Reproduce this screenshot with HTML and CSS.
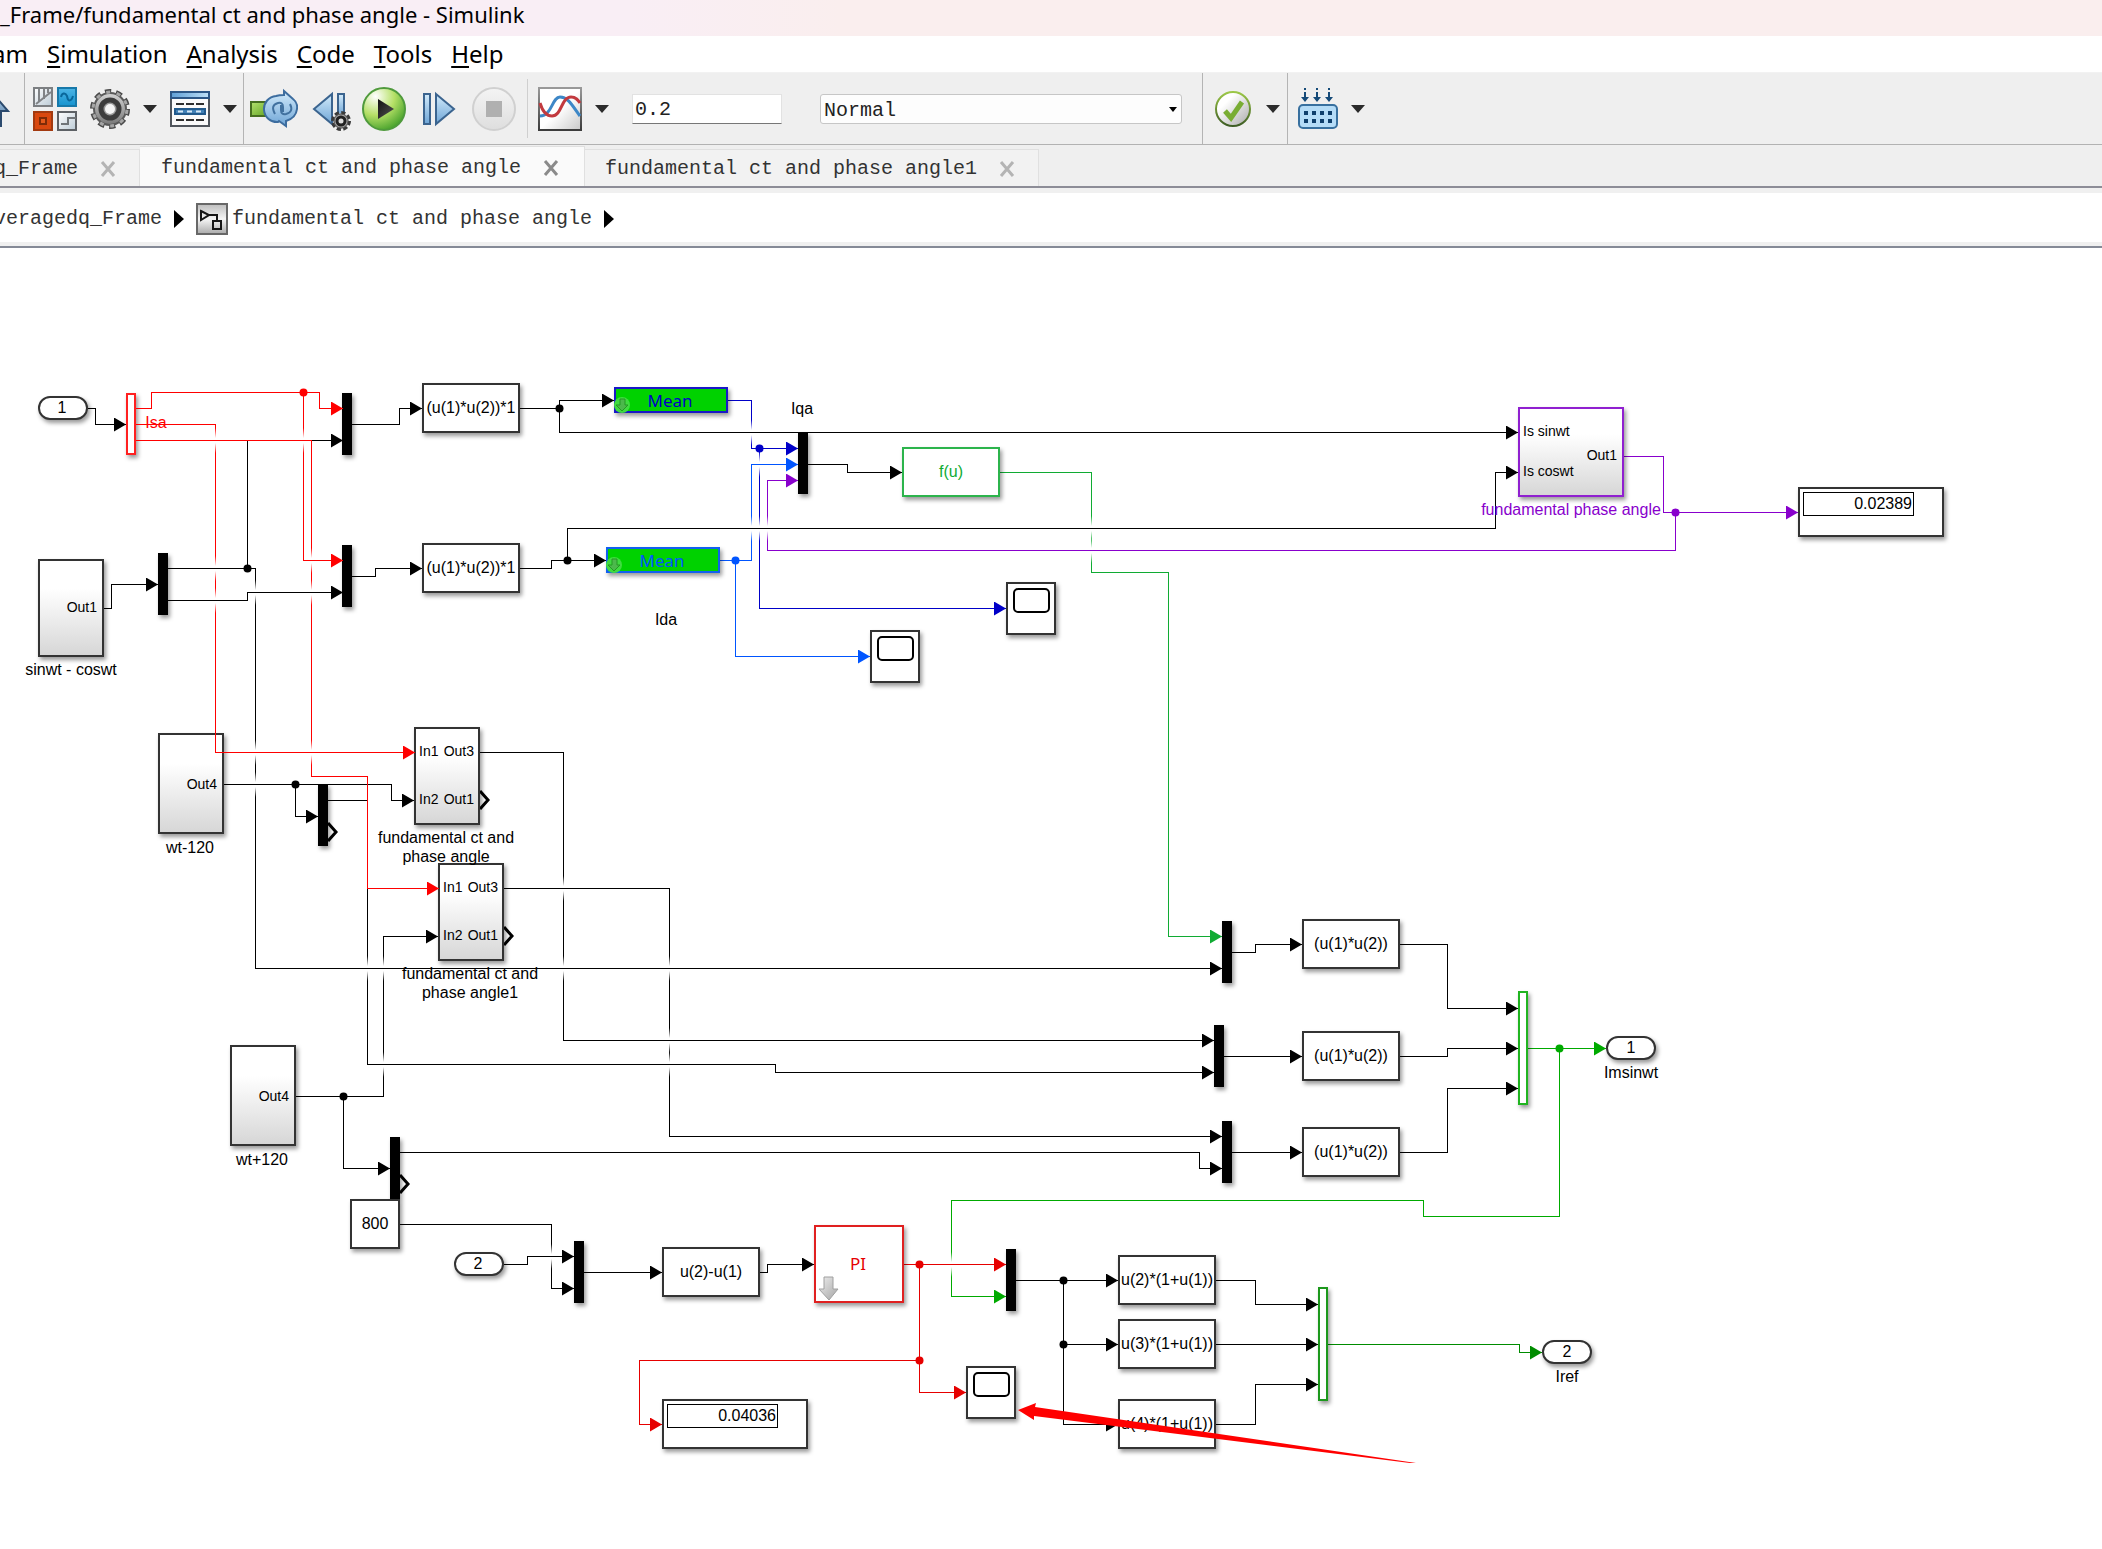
FILE: index.html
```html
<!DOCTYPE html>
<html lang="en">
<head>
<meta charset="utf-8">
<title>Simulink</title>
<link rel="stylesheet" href="styles.css">
</head>
<body>
<header class="titlebar"><h1>_Frame/fundamental ct and phase angle - Simulink</h1></header>

<nav class="menubar">
  <button class="menu-cut">am</button>
  <button><u>S</u>imulation</button>
  <button><u>A</u>nalysis</button>
  <button><u>C</u>ode</button>
  <button><u>T</u>ools</button>
  <button><u>H</u>elp</button>
</nav>

<div class="toolbar">
  <div class="group group-up">
    <button aria-label="Up to parent"><svg width="12" height="44"><defs><linearGradient id="upFill" x1="0" y1="0" x2="0" y2="1"><stop offset="0" stop-color="#a8cdec"/><stop offset="1" stop-color="#3f648c"/></linearGradient></defs><path d="M-12 22 L-4 10 L8 24 H1 V39 H-6" fill="url(#upFill)" stroke="#2b4a6e" stroke-width="2"/></svg></button>
  </div>
  <div class="group group-model">
    <button aria-label="Library browser">
      <svg width="44" height="46" viewBox="0 0 44 46">
        <defs>
          <linearGradient id="libBlue" x1="0" y1="0" x2="0" y2="1"><stop offset="0" stop-color="#4db5e6"/><stop offset="1" stop-color="#1593cf"/></linearGradient>
          <linearGradient id="libPale" x1="0" y1="0" x2="1" y2="1"><stop offset="0" stop-color="#fff"/><stop offset="1" stop-color="#bccbd6"/></linearGradient>
        </defs>
        <rect x="1" y="2" width="18" height="18" fill="url(#libPale)" stroke="#7c7f82" stroke-width="2"/>
        <path d="M6 3v13M11 3v10M3 18 L18 6M15 3v4" stroke="#808386" stroke-width="2" fill="none"/>
        <rect x="25" y="2" width="18" height="18" fill="url(#libBlue)" stroke="#1779aa" stroke-width="2"/>
        <path d="M28 11c1-4 4-5 6-1c1 6 4 6 6 0" stroke="#09679b" stroke-width="2" fill="none"/>
        <rect x="1" y="26" width="18" height="18" fill="#d9480f" stroke="#a33a10" stroke-width="2"/>
        <rect x="7" y="32" width="6" height="6" fill="#e45a1c" stroke="#7d2b08" stroke-width="2"/>
        <rect x="25" y="26" width="18" height="18" fill="url(#libPale)" stroke="#5d6165" stroke-width="2"/>
        <path d="M28 38h7v-6h8" stroke="#6f7478" stroke-width="2" fill="none"/>
      </svg>
    </button>
    <button aria-label="Model configuration parameters">
      <svg width="40" height="44" viewBox="0 0 40 44">
        <defs><linearGradient id="gearFill" x1="0" y1="0" x2="0" y2="1"><stop offset="0" stop-color="#d5d5d5"/><stop offset="1" stop-color="#777"/></linearGradient></defs>
        <circle cx="20" cy="22" r="17" fill="none" stroke="#4a4a4a" stroke-width="6" stroke-dasharray="6 4.68"/>
        <circle cx="20" cy="22" r="16" fill="url(#gearFill)" stroke="#5a5a5a" stroke-width="2"/>
        <circle cx="20" cy="22" r="17" fill="none" stroke="#a6a6a6" stroke-width="3" stroke-dasharray="4 6.68" stroke-dashoffset="-1"/>
        <circle cx="20" cy="22" r="9" fill="#999" stroke="#3c3c3c" stroke-width="5"/>
        <circle cx="20" cy="22" r="5" fill="#f4f4f4"/>
      </svg>
    </button>
    <button aria-label="Configuration menu"><svg width="14" height="8"><path d="M0 0H14L7 8Z" fill="#2b2b2b"/></svg></button>
    <button aria-label="Model explorer">
      <svg width="40" height="38" viewBox="0 0 40 38">
        <defs><linearGradient id="headBlue" x1="0" y1="0" x2="1" y2="0"><stop offset="0" stop-color="#5f9fd6"/><stop offset="1" stop-color="#bfe0f7"/></linearGradient></defs>
        <rect x="1" y="2" width="38" height="34" fill="#fafafa" stroke="#50555c" stroke-width="2"/>
        <rect x="1" y="2" width="38" height="6" fill="url(#headBlue)" stroke="#2c5686" stroke-width="2"/>
        <rect x="5" y="19" width="30" height="5" fill="#3f7fb5" stroke="#225a8c" stroke-width="2"/>
        <path d="M6 14h28M6 30h28" stroke="#2e2e2e" stroke-width="2" stroke-dasharray="8 2"/>
        <path d="M8 21.500h26" stroke="#d5e8f6" stroke-width="2" stroke-dasharray="5 4"/>
      </svg>
    </button>
    <button aria-label="Explorer menu"><svg width="14" height="8"><path d="M0 0H14L7 8Z" fill="#2b2b2b"/></svg></button>
  </div>
  <div class="group group-run">
    <button aria-label="Update diagram">
      <svg width="48" height="46" viewBox="0 0 48 46">
        <defs>
          <linearGradient id="grn" x1="0" y1="0" x2="1" y2="1"><stop offset="0" stop-color="#b4e26e"/><stop offset="1" stop-color="#5d9f1f"/></linearGradient>
          <linearGradient id="sky" x1="0" y1="0" x2="0" y2="1"><stop offset="0" stop-color="#d3ebfb"/><stop offset="1" stop-color="#6ea5d6"/></linearGradient>
        </defs>
        <rect x="1" y="16" width="20" height="14" fill="url(#grn)" stroke="#466e20" stroke-width="2"/>
        <path d="M28 36a13 13 0 0 1-2-26q3-1 8-1V5l9 8q5 4 4 10q-1 9-11 12v5l-7-5z" fill="url(#sky)" stroke="#3d6d9f" stroke-width="2"/>
        <path d="M25 28q-5-9 3-11q5-1 5 4v5M40 18q4 8-4 10q-5 1-5-4v-5" fill="none" stroke="#41719f" stroke-width="2"/>
      </svg>
    </button>
    <button aria-label="Step back">
      <svg width="48" height="46" viewBox="0 0 48 46">
        <path d="M9 23 L27 8 V38Z" fill="url(#sky)" stroke="#3b648f" stroke-width="2"/>
        <rect x="33" y="8" width="6" height="22" fill="url(#sky)" stroke="#3b648f" stroke-width="2"/>
        <circle cx="36" cy="35" r="8" fill="#bbb" stroke="#3a3a3a" stroke-width="4" stroke-dasharray="4 2.280"/>
        <circle cx="36" cy="35" r="7" fill="#a5a5a5" stroke="#555"/>
        <circle cx="36" cy="35" r="4" fill="#ddd" stroke="#222" stroke-width="3"/>
      </svg>
    </button>
    <button aria-label="Run">
      <svg width="48" height="46" viewBox="0 0 48 46">
        <defs>
          <radialGradient id="runFill" cx=".3" cy=".2" r=".9"><stop offset="0" stop-color="#fff"/><stop offset=".5" stop-color="#b5e066"/><stop offset="1" stop-color="#3a9a25"/></radialGradient>
          <linearGradient id="playFill" x1="0" y1="0" x2="1" y2="1"><stop offset="0" stop-color="#111"/><stop offset="1" stop-color="#555"/></linearGradient>
        </defs>
        <circle cx="24" cy="23" r="21" fill="url(#runFill)" stroke="#4f9a3c" stroke-width="2"/>
        <path d="M18 13 L34 23 L18 33Z" fill="url(#playFill)"/>
      </svg>
    </button>
    <button aria-label="Step forward">
      <svg width="48" height="46" viewBox="0 0 48 46">
        <rect x="9" y="8" width="6" height="30" fill="url(#sky)" stroke="#3b648f" stroke-width="2"/>
        <path d="M21 8 L39 23 L21 38Z" fill="url(#sky)" stroke="#3b648f" stroke-width="2"/>
      </svg>
    </button>
    <button aria-label="Stop" disabled>
      <svg width="48" height="46" viewBox="0 0 48 46">
        <defs><linearGradient id="stopFill" x1="0" y1="0" x2="0" y2="1"><stop offset="0" stop-color="#f4f4f4"/><stop offset="1" stop-color="#dedede"/></linearGradient></defs>
        <circle cx="24" cy="23" r="21" fill="url(#stopFill)" stroke="#d0d0d0" stroke-width="2"/>
        <rect x="16" y="15" width="16" height="16" fill="#b0b0b0"/>
      </svg>
    </button>
  </div>
  <div class="group group-sim">
    <button aria-label="Simulation data inspector">
      <svg width="44" height="46" viewBox="0 0 44 46">
        <defs><linearGradient id="plotFill" x1="0" y1="0" x2="1" y2="1"><stop offset=".5" stop-color="#fff"/><stop offset="1" stop-color="#c9c9c9"/></linearGradient>
        <linearGradient id="plotEdge" x1="0" y1="0" x2="0" y2="1"><stop offset="0" stop-color="#999"/><stop offset="1" stop-color="#3c3c3c"/></linearGradient></defs>
        <rect x="1" y="2" width="42" height="42" fill="url(#plotFill)" stroke="url(#plotEdge)" stroke-width="2"/>
        <path d="M2 30c12 0 12-19 20-19s12 8 20 19" fill="none" stroke="#3d87c7" stroke-width="3"/>
        <path d="M2 17c3 10 7 13 12 13c10 0 9-19 19-19c5 0 7 3 9 6" fill="none" stroke="#c23a3f" stroke-width="3"/>
      </svg>
    </button>
    <button aria-label="Inspector menu"><svg width="14" height="8"><path d="M0 0H14L7 8Z" fill="#2b2b2b"/></svg></button>
    <input class="stop-time" type="text" value="0.2" aria-label="Stop time">
    <div class="mode">
      <select aria-label="Simulation mode"><option>Normal</option></select>
      <svg width="8" height="5"><path d="M0 0H8L4 5Z"/></svg>
    </div>
  </div>
  <div class="group group-check">
    <button aria-label="Model advisor">
      <svg width="36" height="38" viewBox="0 0 36 38">
        <defs>
          <linearGradient id="ringFill" x1="0" y1="0" x2="0" y2="1"><stop offset="0" stop-color="#9cc848"/><stop offset="1" stop-color="#3d5c24"/></linearGradient>
          <linearGradient id="discFill" x1="0" y1="0" x2="1" y2="1"><stop offset=".3" stop-color="#fff"/><stop offset="1" stop-color="#a8a8a8"/></linearGradient>
        </defs>
        <circle cx="18" cy="19" r="17" fill="url(#discFill)" stroke="url(#ringFill)" stroke-width="2"/>
        <path d="M10 21l6 7L27 12" fill="none" stroke="#79ad33" stroke-width="5"/>
      </svg>
    </button>
    <button aria-label="Advisor menu"><svg width="14" height="8"><path d="M0 0H14L7 8Z" fill="#2b2b2b"/></svg></button>
  </div>
  <div class="group group-build">
    <button aria-label="Build model">
      <svg width="40" height="44" viewBox="0 0 40 44">
        <g fill="#154a78"><path d="M6 1h2v2H6zM18 1h2v2h-2zM30 1h2v2h-2zM6 5h2v5h3l-4 5-4-5h3zM18 5h2v5h3l-4 5-4-5h3zM30 5h2v5h3l-4 5-4-5h3z"/></g>
        <rect x="1" y="18" width="38" height="23" rx="4" fill="#b5dcf7" stroke="#38709f" stroke-width="2"/>
        <path d="M6 26h28M6 34h28" stroke="#0f3f6c" stroke-width="4" stroke-dasharray="4 4"/>
      </svg>
    </button>
    <button aria-label="Build menu"><svg width="14" height="8"><path d="M0 0H14L7 8Z" fill="#2b2b2b"/></svg></button>
  </div>
</div>

<div class="tabs" role="tablist">
  <div class="tab tab-cut" role="tab"><span>q_Frame</span><button aria-label="Close tab"><svg width="16" height="16"><path d="M2 1L14 15M14 1L2 15"/></svg></button></div>
  <div class="tab active" role="tab" aria-selected="true"><span>fundamental ct and phase angle</span><button aria-label="Close tab"><svg width="16" height="16"><path d="M2 1L14 15M14 1L2 15"/></svg></button></div>
  <div class="tab" role="tab"><span>fundamental ct and phase angle1</span><button aria-label="Close tab"><svg width="16" height="16"><path d="M2 1L14 15M14 1L2 15"/></svg></button></div>
</div>

<nav class="crumbs" aria-label="Model hierarchy">
  <a class="crumb-cut" href="#">veragedq_Frame</a>
  <svg width="10" height="18"><path d="M0 0L10 9L0 18Z"/></svg>
  <svg class="crumb-icon" width="32" height="32" viewBox="0 0 32 32">
    <defs><linearGradient id="crumbFill" x1="0" y1="0" x2="0" y2="1"><stop offset="0" stop-color="#bdbdbd"/><stop offset=".5" stop-color="#f5f5f5"/><stop offset="1" stop-color="#aaa"/></linearGradient></defs>
    <rect x="1" y="1" width="30" height="30" fill="url(#crumbFill)" stroke="#686868" stroke-width="2"/>
    <path d="M5 8L13 12L5 17ZM13 12h8v6M17 18h8v8h-8z" fill="none" stroke="#161616" stroke-width="2"/>
  </svg>
  <a href="#">fundamental ct and phase angle</a>
  <svg width="10" height="18"><path d="M0 0L10 9L0 18Z"/></svg>
</nav>

<main class="canvas">
<svg class="diagram" role="img" aria-label="Block diagram">
  <defs>
    <marker id="mk" class="mk" markerUnits="userSpaceOnUse" markerWidth="13" markerHeight="14" refX="12" refY="7" orient="auto"><path d="M0 0L12 7L0 14Z" fill="#000"/></marker>
    <marker id="mr" class="mk" markerUnits="userSpaceOnUse" markerWidth="13" markerHeight="14" refX="12" refY="7" orient="auto"><path d="M0 0L12 7L0 14Z" fill="#f00"/></marker>
    <marker id="mc" class="mk" markerUnits="userSpaceOnUse" markerWidth="13" markerHeight="14" refX="12" refY="7" orient="auto"><path d="M0 0L12 7L0 14Z" fill="#e60000"/></marker>
    <marker id="mb" class="mk" markerUnits="userSpaceOnUse" markerWidth="13" markerHeight="14" refX="12" refY="7" orient="auto"><path d="M0 0L12 7L0 14Z" fill="#0000c8"/></marker>
    <marker id="ml" class="mk" markerUnits="userSpaceOnUse" markerWidth="13" markerHeight="14" refX="12" refY="7" orient="auto"><path d="M0 0L12 7L0 14Z" fill="#0055ff"/></marker>
    <marker id="mp" class="mk" markerUnits="userSpaceOnUse" markerWidth="13" markerHeight="14" refX="12" refY="7" orient="auto"><path d="M0 0L12 7L0 14Z" fill="#8800cc"/></marker>
    <marker id="mt" class="mk" markerUnits="userSpaceOnUse" markerWidth="13" markerHeight="14" refX="12" refY="7" orient="auto"><path d="M0 0L12 7L0 14Z" fill="#10ab33"/></marker>
    <marker id="mg" class="mk" markerUnits="userSpaceOnUse" markerWidth="13" markerHeight="14" refX="12" refY="7" orient="auto"><path d="M0 0L12 7L0 14Z" fill="#00aa00"/></marker>
    <marker id="md" class="mk" markerUnits="userSpaceOnUse" markerWidth="13" markerHeight="14" refX="12" refY="7" orient="auto"><path d="M0 0L12 7L0 14Z" fill="#008c00"/></marker>
    <linearGradient id="subFill" x1="0" y1="0" x2="0" y2="1"><stop offset=".3" stop-color="#fff"/><stop offset="1" stop-color="#d6d6d6"/></linearGradient>
    <linearGradient id="fade" x1="0" y1="0" x2="0" y2="1"><stop offset="0" stop-color="#fff" stop-opacity="0"/><stop offset=".4" stop-color="#fff"/><stop offset=".6" stop-color="#fff"/><stop offset="1" stop-color="#fff" stop-opacity="0"/></linearGradient>
    <linearGradient id="maskFill" x1="0" y1="0" x2="1" y2="1"><stop offset="0" stop-color="#eee"/><stop offset="1" stop-color="#a5a5a5"/></linearGradient>
    <g id="hop"><rect x="-1" y="-12" width="3" height="25" fill="url(#fade)"/><rect x="-1" y="0" width="3" height="1" fill="currentColor"/></g>
    <g id="scope"><rect class="blk" width="48" height="51"/><rect x="7" y="6" width="35" height="23" rx="4" fill="none" stroke="#000" stroke-width="2"/></g>
    <path id="openport" d="M0 -9L8 0L0 9" fill="none" stroke="#000" stroke-width="3"/>
    <rect id="mux" class="mux" width="10" height="62"/>
    <rect id="fcn" class="blk" width="96" height="48"/>
    <rect id="port" class="blk" width="48" height="22" rx="11"/>
    <path id="mask" d="M5 0h9v12h5l-9 11l-10-11h5z"/>
    <g id="minimask"><circle cx="7" cy="7" r="8" fill="#3fdc3f"/><path d="M5 1h5v6h3l-6 6l-6-6h4z" fill="#4cb84c" stroke="#229a22"/></g>
  </defs>
  <g transform="translate(0 -248)">
    <g class="wires">
      <g class="k">
        <path d="M88 408.500H95.500V424.500H126"/>
        <path d="M104 608.500H111.500V584.500H158"/>
        <path d="M247.500 568.500V440.500H343"/>
        <path d="M168 568.500H255.500V968.500H1222"/>
        <path d="M168 600.500H247.500V592.500H343"/>
        <path d="M352 424.500H399.500V408.500H422"/>
        <path d="M352 576.500H375.500V568.500H422"/>
        <path d="M519 408.500H559.500V400.500H614"/>
        <path d="M559.500 408.500V432.500H1518"/>
        <path d="M519 568.500H551.500V560.500H606"/>
        <path d="M567.500 560.500V528.500H1495.500V472.500H1518"/>
        <path d="M808 464.500H847.500V472.500H902"/>
        <path d="M224 784.500H391.500V800.500H414"/>
        <path d="M295.500 784.500V816.500H318"/>
        <path d="M480 752.500H563.500V1040.500H1214"/>
        <path d="M504 888.500H669.500V1136.500H1222"/>
        <path d="M328 800.500H367.500V1064.500H775.500V1072.500H1214"/>
        <path d="M296 1096.500H383.500V936.500H438"/>
        <path d="M343.500 1096.500V1168.500H390"/>
        <path d="M400 1152.500H1199.500V1168.500H1222"/>
        <path d="M400 1224.500H551.500V1288.500H574"/>
        <path d="M504 1264.500H527.500V1256.500H574"/>
        <path d="M584 1272.500H662"/>
        <path d="M760 1272.500H767.500V1264.500H814"/>
        <path d="M1232 952.500H1255.500V944.500H1302"/>
        <path d="M1224 1056.500H1302"/>
        <path d="M1232 1152.500H1302"/>
        <path d="M1400 944.500H1447.500V1008.500H1518"/>
        <path d="M1400 1056.500H1447.500V1048.500H1518"/>
        <path d="M1400 1152.500H1447.500V1088.500H1518"/>
        <path d="M1016 1280.500H1118"/>
        <path d="M1063.500 1344.500H1118"/>
        <path d="M1063.500 1280.500V1424.500H1118"/>
        <path d="M1216 1280.500H1255.500V1304.500H1318"/>
        <path d="M1216 1344.500H1318"/>
        <path d="M1216 1424.500H1255.500V1384.500H1318"/>
      </g>
      <g class="p">
        <path d="M1623 456.500H1663.500V512.500H1798"/>
        <path d="M1675.500 512.500V550.500H767.500V480.500H798"/>
      </g>
      <g class="b">
        <path d="M728 400.500H751.500V448.500H798"/>
        <path d="M759.500 448.500V608.500H1006"/>
      </g>
      <g class="l">
        <path d="M720 560.500H751.500V464.500H798"/>
        <path d="M735.500 560.500V656.500H870"/>
      </g>
      <g class="t"><path d="M1000 472.500H1091.500V572.500H1168.500V936.500H1222"/></g>
      <g class="g">
        <path d="M1528 1048.500H1606"/>
        <path d="M1559.500 1048.500V1216.500H1423.500V1200.500H951.500V1296.500H1006"/>
      </g>
      <g class="d"><path d="M1328 1344.500H1519.500V1352.500H1542"/></g>
      <g class="c">
        <path d="M904 1264.500H1006"/>
        <path d="M919.500 1264.500V1392.500H966"/>
        <path d="M919.500 1360.500H639.500V1424.500H662"/>
      </g>
    </g>

    <g class="blocks">
      <use href="#port" x="39" y="397"/>
      <use href="#port" x="455" y="1253"/>
      <use href="#port" x="1607" y="1037"/>
      <use href="#port" x="1543" y="1341"/>
      <use href="#fcn" x="423" y="384"/>
      <use href="#fcn" x="423" y="544"/>
      <use href="#fcn" x="663" y="1248"/>
      <use href="#fcn" x="1303" y="920"/>
      <use href="#fcn" x="1303" y="1032"/>
      <use href="#fcn" x="1303" y="1128"/>
      <use href="#fcn" x="1119" y="1256"/>
      <use href="#fcn" x="1119" y="1320"/>
      <use href="#fcn" x="1119" y="1400"/>
      <rect class="blk s-t" x="903" y="448" width="96" height="48"/>
      <use href="#mux" x="342" y="393"/>
      <use href="#mux" x="342" y="545"/>
      <use href="#mux" x="158" y="553"/>
      <use href="#mux" x="798" y="432"/>
      <use href="#mux" x="318" y="784"/>
      <use href="#mux" x="390" y="1137"/>
      <use href="#mux" x="574" y="1241"/>
      <use href="#mux" x="1222" y="921"/>
      <use href="#mux" x="1214" y="1025"/>
      <use href="#mux" x="1222" y="1121"/>
      <use href="#mux" x="1006" y="1249"/>
      <rect class="blk s-r" x="127" y="394" width="8" height="60"/>
      <rect class="blk s-g" x="1519" y="992" width="8" height="112"/>
      <rect class="blk s-d" x="1319" y="1288" width="8" height="112"/>
      <use href="#openport" x="480" y="800"/>
      <use href="#openport" x="504" y="936"/>
      <use href="#openport" x="328" y="832"/>
      <use href="#openport" x="400" y="1184"/>
      <rect class="blk sub" x="39" y="560" width="64" height="96"/>
      <rect class="blk sub" x="159" y="734" width="64" height="99"/>
      <rect class="blk sub" x="231" y="1046" width="64" height="99"/>
      <rect class="blk sub" x="415" y="728" width="64" height="96"/>
      <rect class="blk sub" x="439" y="864" width="64" height="96"/>
      <rect class="blk sub s-p" x="1519" y="408" width="104" height="88"/>
      <rect class="blk" x="351" y="1200" width="48" height="48"/>
      <rect class="blk mean s-b" x="615" y="388" width="112" height="24"/>
      <rect class="blk mean s-l" x="607" y="548" width="112" height="24"/>
      <use href="#minimask" x="615" y="398"/>
      <use href="#minimask" x="607" y="558"/>
      <rect class="blk s-c" x="815" y="1226" width="88" height="76"/>
      <use href="#mask" x="819" y="1277" fill="url(#maskFill)" stroke="#a0a0a0"/>
      <use href="#scope" x="1007" y="583"/>
      <use href="#scope" x="871" y="631"/>
      <use href="#scope" x="967" y="1367"/>
      <rect class="blk" x="1799" y="488" width="144" height="48"/>
      <rect class="readout" x="1803.500" y="492.500" width="110" height="23"/>
      <rect class="blk" x="663" y="1400" width="144" height="48"/>
      <rect class="readout" x="667.500" y="1404.500" width="110" height="23"/>
    </g>

    <g class="wires r">
      <path d="M136 408.500H151.500V392.500H319.500V408.500H343"/>
      <path d="M303.500 392.500V560.500H343"/>
      <path d="M136 424.500H215.500V752.500H415"/>
      <path d="M136 440.500H311.500V776.500H367.500V888.500H439"/>
    </g>

    <g class="hops">
      <use href="#hop" x="215" y="440" color="#f00"/>
      <use href="#hop" x="215" y="568"/>
      <use href="#hop" x="215" y="600"/>
      <use href="#hop" x="303" y="440" color="#f00"/>
      <use href="#hop" x="311" y="560" color="#f00"/>
      <use href="#hop" x="311" y="592"/>
      <use href="#hop" x="311" y="752" color="#f00"/>
      <use href="#hop" x="255" y="592"/>
      <use href="#hop" x="255" y="752" color="#f00"/>
      <use href="#hop" x="255" y="784"/>
      <use href="#hop" x="367" y="968"/>
      <use href="#hop" x="383" y="968"/>
      <use href="#hop" x="383" y="1064"/>
      <use href="#hop" x="563" y="888"/>
      <use href="#hop" x="563" y="968"/>
      <use href="#hop" x="669" y="968"/>
      <use href="#hop" x="669" y="1040"/>
      <use href="#hop" x="669" y="1064"/>
      <use href="#hop" x="551" y="1256"/>
      <use href="#hop" x="751" y="432"/>
      <use href="#hop" x="751" y="528"/>
      <use href="#hop" x="759" y="464" color="#0055ff"/>
      <use href="#hop" x="759" y="528"/>
      <use href="#hop" x="767" y="528"/>
      <use href="#hop" x="1091" y="528"/>
      <use href="#hop" x="1091" y="550" color="#8800cc"/>
      <use href="#hop" x="951" y="1264" color="#e60000"/>
    </g>

    <g class="dots">
      <circle class="f-r" cx="303.500" cy="392.500" r="4"/>
      <circle cx="247.500" cy="568.500" r="4"/>
      <circle cx="559.500" cy="408.500" r="4"/>
      <circle cx="567.500" cy="560.500" r="4"/>
      <circle class="f-b" cx="759.500" cy="448.500" r="4"/>
      <circle class="f-l" cx="735.500" cy="560.500" r="4"/>
      <circle class="f-p" cx="1675.500" cy="512.500" r="4"/>
      <circle cx="295.500" cy="784.500" r="4"/>
      <circle cx="343.500" cy="1096.500" r="4"/>
      <circle class="f-g" cx="1559.500" cy="1048.500" r="4"/>
      <circle class="f-c" cx="919.500" cy="1264.500" r="4"/>
      <circle class="f-c" cx="919.500" cy="1360.500" r="4"/>
      <circle cx="1063.500" cy="1280.500" r="4"/>
      <circle cx="1063.500" cy="1344.500" r="4"/>
    </g>

    <g class="labels">
      <text x="62" y="413">1</text>
      <text x="478" y="1269">2</text>
      <text x="1631" y="1053">1</text>
      <text x="1567" y="1357">2</text>
      <text class="f-r" x="156" y="428">Isa</text>
      <text x="471" y="413">(u(1)*u(2))*1</text>
      <text x="471" y="573">(u(1)*u(2))*1</text>
      <text x="711" y="1277">u(2)-u(1)</text>
      <text x="1351" y="949">(u(1)*u(2))</text>
      <text x="1351" y="1061">(u(1)*u(2))</text>
      <text x="1351" y="1157">(u(1)*u(2))</text>
      <text x="1167" y="1285">u(2)*(1+u(1))</text>
      <text x="1167" y="1349">u(3)*(1+u(1))</text>
      <text x="1167" y="1429">u(4)*(1+u(1))</text>
      <text class="f-t" x="951" y="477">f(u)</text>
      <text x="375" y="1229">800</text>
      <text x="802" y="414">Iqa</text>
      <text x="666" y="625">Ida</text>
      <text x="71" y="675">sinwt - coswt</text>
      <text x="190" y="853">wt-120</text>
      <text x="262" y="1165">wt+120</text>
      <text x="446" y="843">fundamental ct and</text>
      <text x="446" y="862">phase angle</text>
      <text x="470" y="979">fundamental ct and</text>
      <text x="470" y="998">phase angle1</text>
      <text class="f-p" x="1571" y="515">fundamental phase angle</text>
      <text x="1631" y="1078">Imsinwt</text>
      <text x="1567" y="1382">Iref</text>
      <text class="end" x="1912" y="509">0.02389</text>
      <text class="end" x="776" y="1421">0.04036</text>
      <text class="icon f-b" x="670" y="407">Mean</text>
      <text class="icon f-l" x="662" y="567">Mean</text>
      <text class="icon f-c" x="858" y="1270">PI</text>
      <g class="pins">
        <text class="end" x="97" y="612">Out1</text>
        <text class="end" x="217" y="789">Out4</text>
        <text class="end" x="289" y="1101">Out4</text>
        <text class="start" x="419" y="756">In1</text>
        <text class="start" x="419" y="804">In2</text>
        <text class="end" x="474" y="756">Out3</text>
        <text class="end" x="474" y="804">Out1</text>
        <text class="start" x="443" y="892">In1</text>
        <text class="start" x="443" y="940">In2</text>
        <text class="end" x="498" y="892">Out3</text>
        <text class="end" x="498" y="940">Out1</text>
        <text class="start" x="1523" y="436">Is sinwt</text>
        <text class="start" x="1523" y="476">Is coswt</text>
        <text class="end" x="1617" y="460">Out1</text>
      </g>
    </g>

    <path class="f-r" d="M1018 1410L1036 1403L1035 1407L1416 1463L1410 1463L1034 1416L1034 1420Z"/>
  </g>
</svg>
</main>
</body>
</html>
```
FILE: styles.css
```css
* { box-sizing: border-box; }
body {
  margin: 0;
  min-height: 100vh;
  display: flex;
  flex-direction: column;
  background: #fff;
  color: #000;
  overflow-x: hidden;
}
button {
  appearance: none;
  border: 0;
  padding: 0;
  background: none;
  color: inherit;
  font: inherit;
}
button svg, .crumbs svg { display: block; }

.titlebar {
  height: 36px;
  padding-bottom: 8px;
  display: flex;
  align-items: center;
  background: linear-gradient(90deg, #f9eef5 30%, #faeeee 40%);
}
.titlebar h1 {
  margin: 0;
  font: 400 22px/28px "Noto Sans", sans-serif;
  white-space: nowrap;
}

.menubar {
  height: 36px;
  display: flex;
  align-items: center;
  gap: 19px;
  font: 24px/34px "Noto Sans", sans-serif;
}
.menu-cut {
  width: 28px;
  display: flex;
  justify-content: flex-end;
  overflow: hidden;
}
.menubar u { text-underline-offset: 3px; text-decoration-thickness: 2px; }

.toolbar {
  height: 73px;
  display: flex;
  background: #efefef;
  border-top: 1px solid #f2f2f2;
  border-bottom: 1px solid #b2b2b2;
}
.group {
  display: flex;
  align-items: center;
  gap: 13px;
  border-right: 1px solid #b4b4b4;
}
.group-up { width: 25px; }
.group-model { padding: 0 6px 0 8px; }
.group-run {
  margin: 6px 0;
  padding: 0 9px 0 6px;
  gap: 7px;
  border-color: #cfcfcf;
}
.group-sim { padding: 0 20px 0 10px; }
.group-check { padding: 0 7px 0 12px; gap: 15px; }
.group-build { padding: 0 10px; border: 0; }

.stop-time, .mode select {
  height: 30px;
  border: 1px solid #e2e2e2;
  background: #fff;
  color: #222;
  font: 20px/28px "Liberation Mono", monospace;
}
.stop-time {
  width: 150px;
  margin-left: 10px;
  padding: 2px 2px 0;
  border-bottom-color: #777;
}
.mode { position: relative; margin-left: 25px; }
.mode select {
  display: block;
  width: 362px;
  padding: 2px 3px 0;
  appearance: none;
  border: 1px solid #c6c6c6;
  border-radius: 3px;
  background: #fdfdfd;
}
.mode svg { position: absolute; right: 5px; top: 13px; }

.tabs {
  height: 43px;
  display: flex;
  align-items: flex-end;
  background: #efefef;
  border-bottom: 2px solid #8d8d97;
  font: 20px/26px "Liberation Mono", monospace;
}
.tab {
  height: 37px;
  padding: 2px 23px 0 20px;
  display: flex;
  align-items: center;
  gap: 22px;
  background: #f2f2f2;
  border: 1px solid #e0e0e0;
  border-width: 1px 1px 0 0;
  color: #333;
  white-space: nowrap;
}
.tab svg { stroke: #b4b4b4; stroke-width: 3; fill: none; }
.tab.active {
  height: 40px;
  padding: 2px 25px 0 21px;
  background: #fafafa;
}
.tab.active svg { stroke: #8a8a8a; }
.tab-cut {
  width: 140px;
  padding-left: 0;
  justify-content: flex-end;
  overflow: hidden;
}

.crumbs {
  height: 60px;
  padding-bottom: 2px;
  display: flex;
  align-items: center;
  gap: 12px;
  border-top: 5px solid #f0f0f0;
  border-bottom: 2px solid #858a97;
  box-shadow: inset 0 -4px #f0f0f0;
  font: 20px/26px "Liberation Mono", monospace;
}
.crumbs a { color: #333; text-decoration: none; white-space: nowrap; }
.crumbs .crumb-icon { margin: 0 -8px 0 0; }
.crumb-cut {
  width: 162px;
  display: flex;
  justify-content: flex-end;
  overflow: hidden;
}

.canvas { flex: 1; display: flex; }
.diagram {
  flex: 1;
  min-height: 1240px;
  overflow: hidden;
}
.wires path { fill: none; shape-rendering: crispEdges; }
.mk path { shape-rendering: auto; }
.k path { stroke: #000; marker-end: url(#mk); }
.r path { stroke: #f00; marker-end: url(#mr); }
.c path { stroke: #e60000; marker-end: url(#mc); }
.b path { stroke: #0000c8; marker-end: url(#mb); }
.l path { stroke: #0055ff; marker-end: url(#ml); }
.p path { stroke: #8800cc; marker-end: url(#mp); }
.t path { stroke: #10ab33; marker-end: url(#mt); }
.g path { stroke: #00aa00; marker-end: url(#mg); }
.d path { stroke: #008c00; marker-end: url(#md); }

.blk {
  fill: #fff;
  stroke: #333;
  stroke-width: 2;
  filter: drop-shadow(2px 3px 2px rgba(0, 0, 0, .4));
}
.mux { fill: #000; filter: drop-shadow(2px 3px 2px rgba(0, 0, 0, .4)); }
.sub { fill: url(#subFill); }
.mean { fill: #00d200; }
.readout { fill: #fff; stroke: #000; shape-rendering: crispEdges; }
.s-r { stroke: #ff2020; }
.s-c { stroke: #e02020; }
.s-b { stroke: #1818c8; }
.s-l { stroke: #1060f0; }
.s-p { stroke: #9020d0; }
.s-t { stroke: #2cb44c; }
.s-g { stroke: #20b420; }
.s-d { stroke: #1c981c; }
.f-r { fill: #f00; }
.f-c { fill: #e60000; }
.f-b { fill: #0000c8; }
.f-l { fill: #0055ff; }
.f-p { fill: #8800cc; }
.f-t { fill: #10ab33; }
.f-g { fill: #00aa00; }

.labels { font: 16px "Liberation Sans", Arial, sans-serif; text-anchor: middle; }
.pins { font-size: 14px; }
.icon { font: 17px "Noto Sans", sans-serif; }
.start { text-anchor: start; }
.end { text-anchor: end; }
```
